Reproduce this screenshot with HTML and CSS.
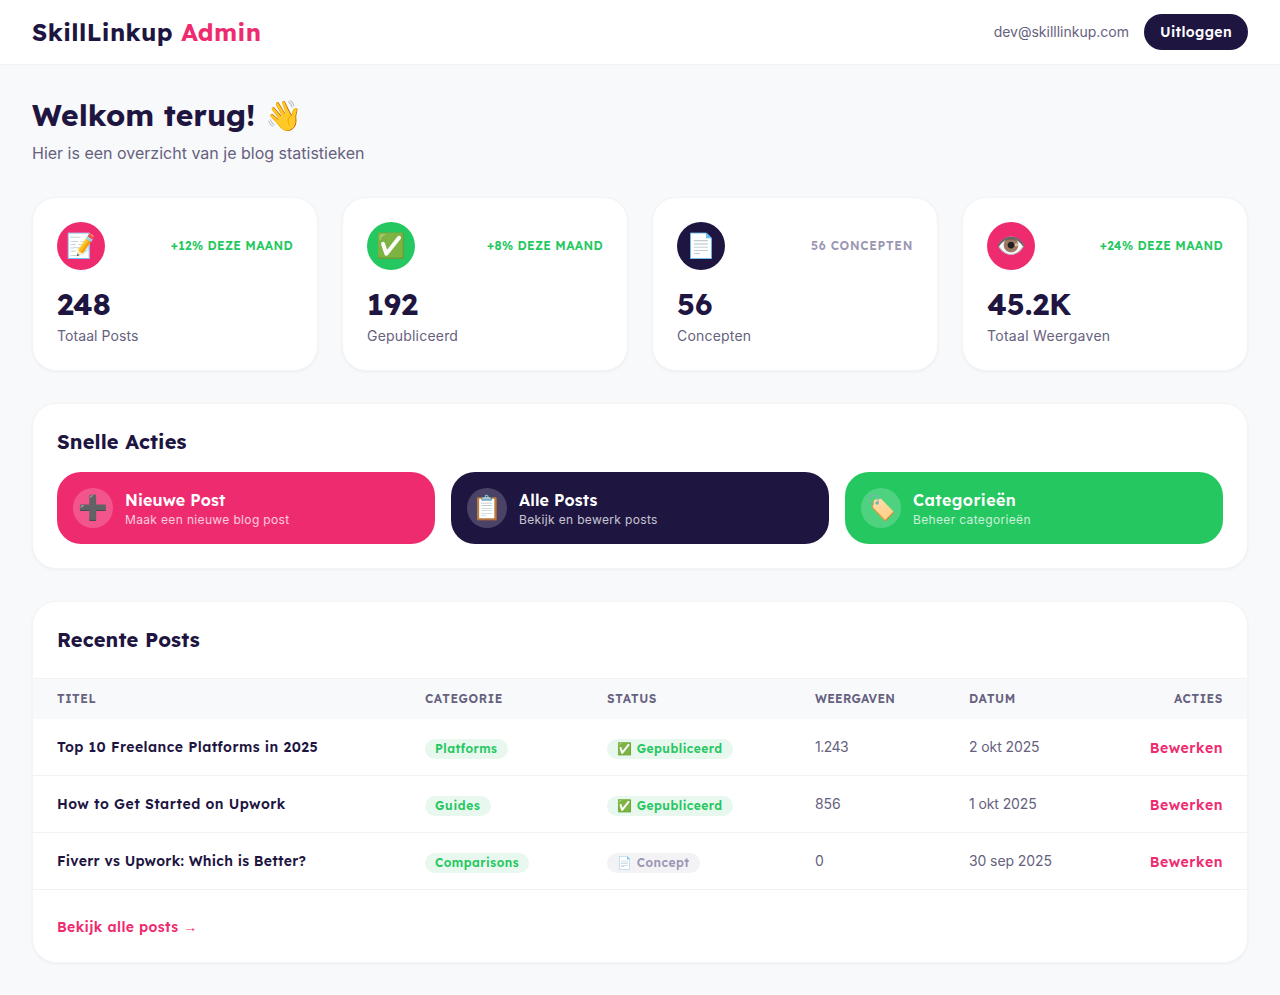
FILE: index.html
```html
<!DOCTYPE html>
<html lang="nl">
<head>
<meta charset="utf-8">
<title>SkillLinkup Admin</title>
<link rel="stylesheet" href="styles.css">
</head>
<body>
<header class="topbar">
  <div class="brand">SkillLinkup <span class="brand-accent">Admin</span></div>
  <div class="account">
    <span class="email">dev@skilllinkup.com</span>
    <button class="logout">Uitloggen</button>
  </div>
</header>
<main class="main">
  <section class="welcome">
    <h1 class="welcome-title">Welkom terug! 👋</h1>
    <p class="welcome-text">Hier is een overzicht van je blog statistieken</p>
  </section>

  <section class="stats">
    <article class="card stat">
      <div class="stat-top"><span class="stat-icon pink">📝</span><span class="trend">+12% deze maand</span></div>
      <div class="stat-value">248</div>
      <div class="stat-label snug">Totaal Posts</div>
    </article>
    <article class="card stat">
      <div class="stat-top"><span class="stat-icon green">✅</span><span class="trend">+8% deze maand</span></div>
      <div class="stat-value">192</div>
      <div class="stat-label">Gepubliceerd</div>
    </article>
    <article class="card stat">
      <div class="stat-top"><span class="stat-icon navy">📄</span><span class="trend neutral">56 concepten</span></div>
      <div class="stat-value">56</div>
      <div class="stat-label">Concepten</div>
    </article>
    <article class="card stat">
      <div class="stat-top"><span class="stat-icon pink">👁️</span><span class="trend">+24% deze maand</span></div>
      <div class="stat-value">45.2K</div>
      <div class="stat-label wide">Totaal Weergaven</div>
    </article>
  </section>

  <section class="card quick">
    <h2 class="heading">Snelle Acties</h2>
    <div class="actions">
      <a class="action pink"><span class="action-icon">➕</span><span class="action-body"><span class="action-title">Nieuwe Post</span><span class="action-text">Maak een nieuwe blog post</span></span></a>
      <a class="action navy"><span class="action-icon">📋</span><span class="action-body"><span class="action-title">Alle Posts</span><span class="action-text">Bekijk en bewerk posts</span></span></a>
      <a class="action green"><span class="action-icon">🏷️</span><span class="action-body"><span class="action-title wide">Categorieën</span><span class="action-text">Beheer categorieën</span></span></a>
    </div>
  </section>

  <section class="card recent">
    <div class="recent-head"><h2 class="heading">Recente Posts</h2></div>
    <table class="posts">
      <colgroup><col class="c-title"><col class="c-category"><col class="c-status"><col class="c-views"><col class="c-date"><col></colgroup>
      <thead>
        <tr><th>Titel</th><th>Categorie</th><th>Status</th><th class="tight">Weergaven</th><th>Datum</th><th class="right">Acties</th></tr>
      </thead>
      <tbody>
        <tr><td class="post-title">Top 10 Freelance Platforms in 2025</td><td class="cell"><span class="badge">Platforms</span></td><td class="cell"><span class="badge">✅ Gepubliceerd</span></td><td class="views">1.243</td><td>2 okt 2025</td><td class="cell right"><a class="link">Bewerken</a></td></tr>
        <tr><td class="post-title">How to Get Started on Upwork</td><td class="cell"><span class="badge wide">Guides</span></td><td class="cell"><span class="badge">✅ Gepubliceerd</span></td><td>856</td><td>1 okt 2025</td><td class="cell right"><a class="link">Bewerken</a></td></tr>
        <tr><td class="post-title snug">Fiverr vs Upwork: Which is Better?</td><td class="cell"><span class="badge">Comparisons</span></td><td class="cell"><span class="badge draft">📄 Concept</span></td><td>0</td><td>30 sep 2025</td><td class="cell right"><a class="link">Bewerken</a></td></tr>
      </tbody>
    </table>
    <div class="recent-foot"><a class="link more">Bekijk alle posts →</a></div>
  </section>
</main>
</body>
</html>
```
FILE: styles.css
```css
* { box-sizing: border-box; }
body { margin: 0; background: #f8f9fb; color: #1e1541; font: 400 16px/24px Inter, sans-serif; }
h1, h2, p { margin: 0; }

.topbar { display: flex; justify-content: space-between; align-items: center; height: 65px; padding: 0 32px; background: #fff; border-bottom: 1px solid #f1f2f5; }
.brand { font: 700 24px/32px Lexend, sans-serif; letter-spacing: .45px; }
.brand-accent { color: #ef2b70; }
.account { display: flex; align-items: center; gap: 15px; }
.email { font-size: 14px; line-height: 20px; color: #66617e; }
.logout { height: 36px; width: 104px; padding: 0; border: 0; border-radius: 18px; background: #1e1541; color: #fff; font: 600 14px/20px Lexend, sans-serif; letter-spacing: .38px; }

.main { padding: 32px; }
.welcome { margin-bottom: 32px; }
.welcome-title { font: 700 30px/36px Lexend, sans-serif; letter-spacing: .04px; margin-bottom: 8px; }
.welcome-text { color: #66617e; }

.card { background: #fff; border: 1px solid #f3f4f6; border-radius: 24px; box-shadow: 0 1px 3px rgba(0, 0, 0, .05); }
.pink { background: #ef2b70; }
.navy { background: #1e1541; }
.green { background: #24c760; }

.stats { display: grid; grid-template-columns: repeat(4, 1fr); gap: 24px; margin-bottom: 32px; }
.stat { padding: 24px; }
.stat-top { display: flex; justify-content: space-between; align-items: center; margin-bottom: 16px; }
.stat-icon { display: flex; align-items: center; justify-content: center; width: 48px; height: 48px; border-radius: 50%; font-size: 24px; }
.trend { font: 600 12px/16px Lexend, sans-serif; text-transform: uppercase; letter-spacing: .34px; color: #24c760; }
.trend.neutral { color: #9b96b3; letter-spacing: .7px; }
.stat-value { font: 700 30px/36px Lexend, sans-serif; margin-bottom: 4px; }
.stat-label { font-size: 14px; line-height: 20px; letter-spacing: .2px; color: #66617e; }
.stat-label.snug { letter-spacing: .08px; }
.stat-label.wide { letter-spacing: .29px; }

.heading { font: 700 20px/28px Lexend, sans-serif; letter-spacing: .16px; }
.quick { padding: 24px; margin-bottom: 32px; }
.quick .heading { margin-bottom: 16px; }
.actions { display: grid; grid-template-columns: repeat(3, 1fr); gap: 16px; }
.action { display: flex; align-items: center; gap: 12px; padding: 16px; border-radius: 24px; color: #fff; }
.action-icon { display: flex; align-items: center; justify-content: center; width: 40px; height: 40px; border-radius: 50%; background: rgba(255, 255, 255, .2); font-size: 24px; }
.action-body { display: flex; flex-direction: column; }
.action-title { font: 600 16px/24px Lexend, sans-serif; letter-spacing: .13px; }
.action-title.wide { letter-spacing: .45px; }
.action-text { font-size: 12px; line-height: 16px; letter-spacing: .35px; opacity: .75; }

.recent { overflow: hidden; }
.recent-head { padding: 24px; border-bottom: 1px solid #f1f2f5; }
.posts { width: 100%; table-layout: fixed; border-collapse: separate; border-spacing: 0; }
.c-title { width: 368px; }
.c-category { width: 182px; }
.c-status { width: 208px; }
.c-views { width: 154px; }
.c-date { width: 157px; }
.posts th { padding: 12px 24px; background: #f8f9fb; font: 600 12px/16px Lexend, sans-serif; letter-spacing: .6px; text-transform: uppercase; text-align: left; color: #66617e; }
.posts .tight { letter-spacing: .25px; }
.posts td { height: 57px; padding: 16px 24px; border-bottom: 1px solid #f1f2f5; font-size: 14px; line-height: 20px; letter-spacing: -.1px; vertical-align: middle; color: #66617e; }
.posts .views { letter-spacing: -.5px; }
.posts .cell { font-size: 16px; line-height: 24px; letter-spacing: 0; }
.posts .post-title { font: 600 14px/20px Lexend, sans-serif; letter-spacing: .47px; color: #1e1541; }
.posts .snug { letter-spacing: .25px; }
.posts .right { text-align: right; }
.badge { display: inline-block; padding: 2px 10px; border-radius: 10px; background: #e8f8ef; color: #24c760; font: 600 12px/16px Lexend, sans-serif; letter-spacing: .5px; }
.badge.wide { letter-spacing: .75px; }
.draft { background: #f3f3f6; color: #9b96b3; }
.link { font: 600 14px/20px Lexend, sans-serif; letter-spacing: .6px; color: #ef2b70; }
.link.more { letter-spacing: .4px; }
.recent-foot { padding: 24px; }
```
